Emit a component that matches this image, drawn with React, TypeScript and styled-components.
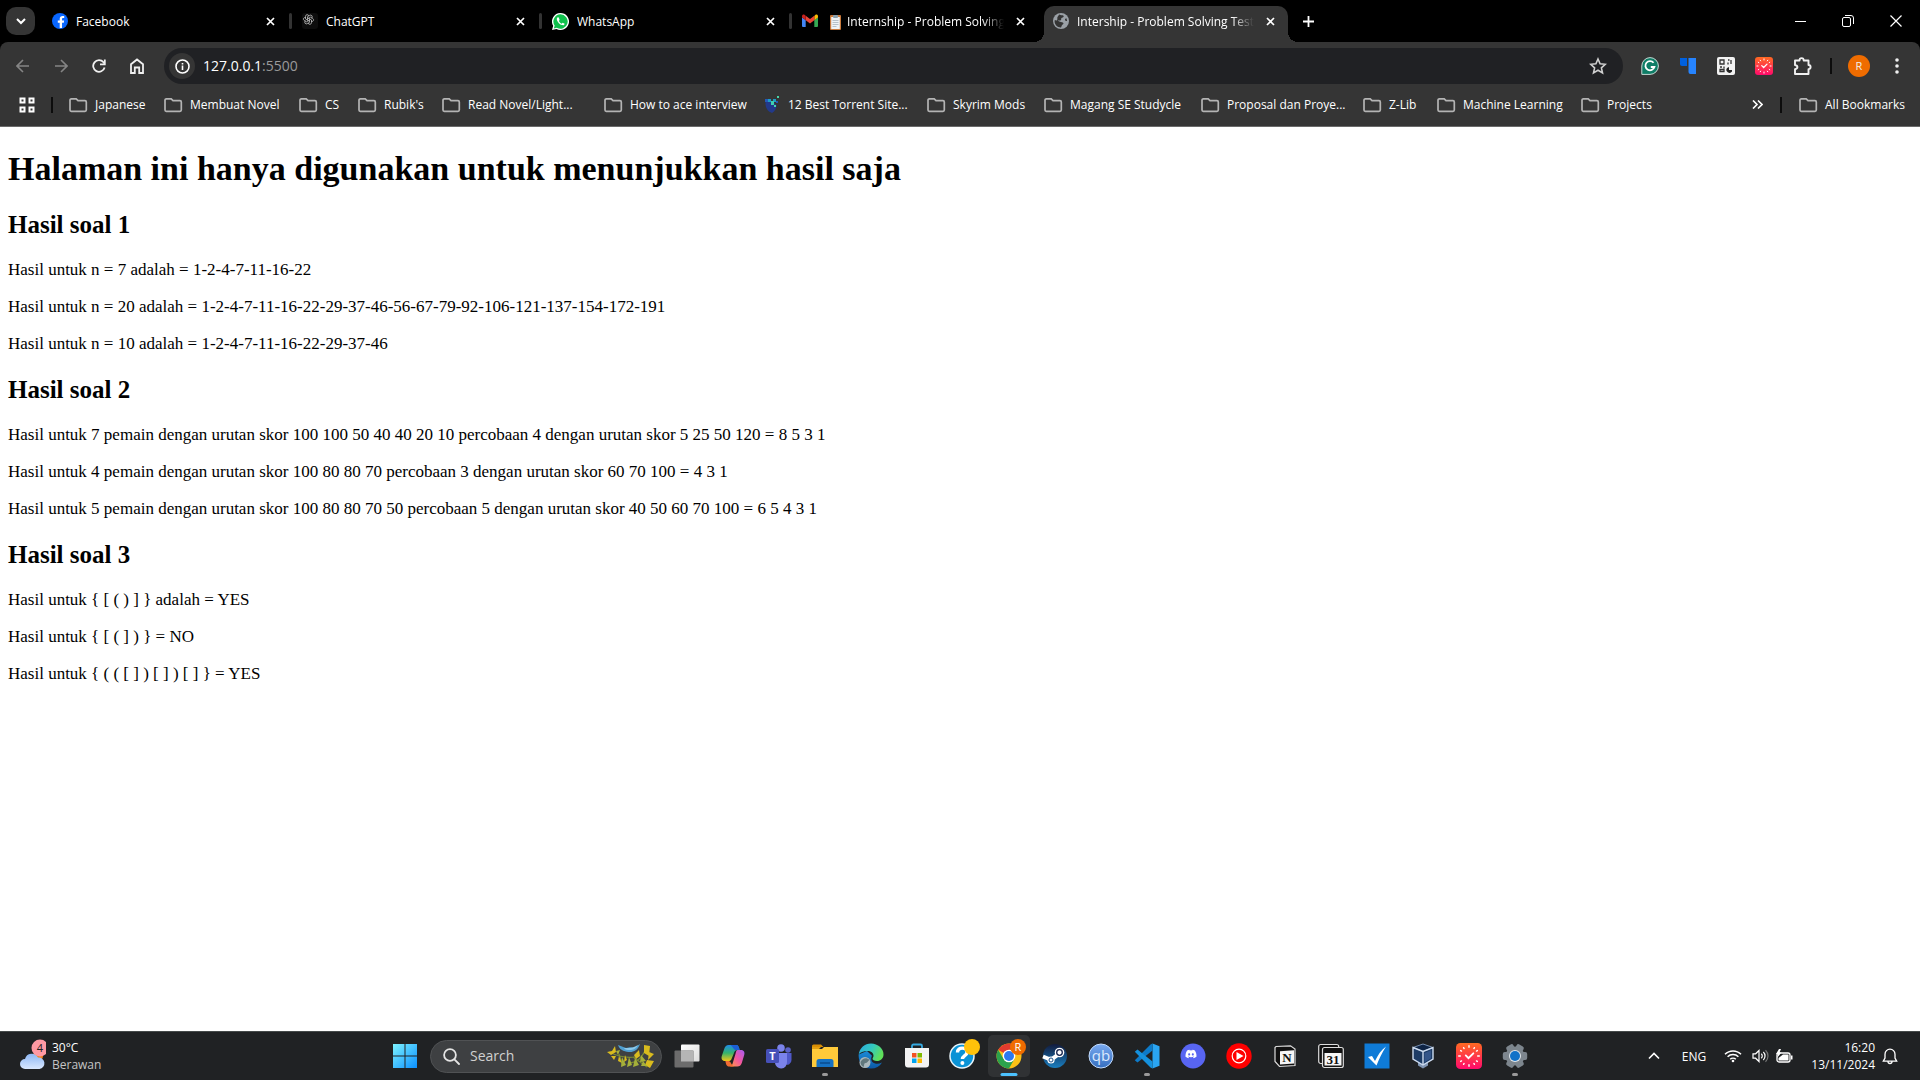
import React from 'react';
import styled, { createGlobalStyle, css } from 'styled-components';
import { FaFacebookF, FaDiscord } from 'react-icons/fa';
import { TbBrandOpenai } from 'react-icons/tb';

const uiFont = `"Segoe UI", "Open Sans", "Noto Sans", sans-serif`;
const serif = `"Liberation Serif", "Times New Roman", serif`;

const Global = createGlobalStyle`
  *, *::before, *::after { box-sizing: border-box; }
  body { margin: 0; background: #fff; }
  button, input { font: inherit; color: inherit; border: 0; background: none; padding: 0; margin: 0; outline: 0; }
  button { display: inline-flex; align-items: center; justify-content: center; flex: none; }
  svg { display: block; flex: none; }
`;

const Screen = styled.div`
  min-height: 100vh;
  display: flex;
  flex-direction: column;
  background: #000;
  font-family: ${uiFont};
  font-size: 12px;
  line-height: 16px;
  color: #fff;
`;

/* ---------- tab strip ---------- */
const TabStrip = styled.header`
  display: flex;
  align-items: flex-end;
  height: 42px;
`;
const TabSearch = styled.button`
  width: 29px;
  height: 28px;
  margin: 0 6px 7px 6px;
  border-radius: 10px;
  background: #353535;
`;
const TabList = styled.div`
  display: flex;
  min-width: 0;
`;
const Tab = styled.div<{ $active?: boolean; $divider?: boolean }>`
  position: relative;
  display: flex;
  align-items: center;
  gap: 8px;
  flex: 0 1 244px;
  width: 244px;
  min-width: 0;
  height: 36px;
  margin: 0 3px;
  padding: 0 10px 6px 8px;
  border-radius: 10px 10px 0 0;
  ${p => p.$active && css`
    padding-left: 9px;
    background: #353535;
    &::before, &::after {
      content: '';
      position: absolute;
      bottom: 0;
      width: 10px;
      height: 10px;
    }
    &::before { left: -10px; background: radial-gradient(circle at 0 0, #000 10px, #353535 10px); }
    &::after { right: -10px; background: radial-gradient(circle at 100% 0, #000 10px, #353535 10px); }
  `}
  ${p => p.$divider && css`
    &::after {
      content: '';
      position: absolute;
      right: -4px;
      top: 7px;
      width: 3px;
      height: 16px;
      border-radius: 2px;
      background: #333;
    }
  `}
`;
const TabTitle = styled.span<{ $fade?: boolean; $lead?: boolean }>`
  flex: 1;
  min-width: 0;
  display: flex;
  align-items: center;
  gap: 6px;
  padding-top: 2px;
  padding-left: ${p => (p.$lead ? 4 : 0)}px;
  overflow: hidden;
  white-space: nowrap;
  ${p => p.$fade && css`mask-image: linear-gradient(to right, #000 calc(100% - 22px), transparent);`}
`;
const CloseButton = styled.button`
  width: 16px;
  height: 16px;
`;
const NewTab = styled.button`
  width: 28px;
  height: 28px;
  margin: 0 0 7px 3px;
`;
const WindowControls = styled.div`
  display: flex;
  align-self: stretch;
  margin-left: auto;
`;
const WindowButton = styled.button`
  width: 48px;
  height: 42px;
`;

/* ---------- toolbar ---------- */
const Toolbar = styled.nav`
  display: flex;
  align-items: center;
  height: 48px;
  padding: 0 4px;
  border-radius: 8px 8px 0 0;
  background: #353535;
`;
const ToolButton = styled.button<{ $dim?: boolean }>`
  width: 38px;
  height: 34px;
  color: ${p => (p.$dim ? '#858585' : '#f0f0f0')};
`;
const Omnibox = styled.div`
  display: flex;
  align-items: center;
  flex: 1;
  min-width: 0;
  height: 36px;
  margin: 0 8px;
  padding: 0 16px 0 5px;
  border-radius: 18px;
  background: #202124;
  font-size: 14px;
  line-height: 20px;
`;
const SiteInfo = styled.button`
  width: 26px;
  height: 26px;
  margin-right: 8px;
  border-radius: 50%;
  background: #353535;
`;
const Address = styled.input`
  field-sizing: content;
  height: 20px;
  color: #fff;
`;
const Port = styled.label`
  flex: 1;
  color: #9a9a9a;
`;
const Avatar = styled.span`
  display: flex;
  align-items: center;
  justify-content: center;
  width: 22px;
  height: 22px;
  border-radius: 50%;
  background: #ef6c00;
  font-size: 11px;
`;
const Divider = styled.i`
  flex: none;
  width: 2px;
  height: 16px;
  background: #0c0c0c;
`;
const ToolDividerWrap = styled.span`
  display: flex;
  justify-content: center;
  width: 19px;
`;

/* ---------- bookmarks ---------- */
const BookmarkBar = styled.nav`
  display: flex;
  align-items: center;
  height: 37px;
  padding: 0 15px 7px 19px;
  border-bottom: 1px solid #6a6a6a;
  background: #353535;
`;
const BookmarkList = styled.div`
  display: flex;
  flex: 1;
  min-width: 0;
  overflow: hidden;
  margin-left: 16px;
`;
const Bookmark = styled.a<{ $w?: number }>`
  display: flex;
  align-items: center;
  gap: 7px;
  flex: none;
  width: ${p => (p.$w ? `${p.$w}px` : 'auto')};
  color: #fff;
  text-decoration: none;
  white-space: nowrap;
`;
const GridButton = styled.button`
  width: 16px;
  height: 16px;
  margin-right: 16px;
`;
const MoreButton = styled.button`
  width: 24px;
  height: 24px;
  margin-right: 11px;
`;
const AllBookmarks = styled(Bookmark)`
  margin-left: 17px;
`;

/* ---------- document ---------- */
const Page = styled.main`
  flex: 1;
  padding: 0 8px;
  background: #fff;
  color: #000;
  font-family: ${serif};
  font-size: 17px;
  line-height: 20px;
`;
const Title = styled.h1`
  margin: 23px 0;
  font-size: 34px;
  line-height: 38px;
`;
const Heading = styled.h2`
  margin: 22px 0 21px;
  font-size: 25px;
  line-height: 28px;
`;
const Line = styled.p`
  margin: 17px 0;
`;

/* ---------- taskbar ---------- */
const Taskbar = styled.footer`
  display: grid;
  grid-template-columns: 1fr auto 1fr;
  align-items: center;
  height: 49px;
  border-top: 1px solid #454a4a;
  background: #202224;
`;
const Weather = styled.button`
  justify-self: start;
  gap: 6px;
  padding-left: 19px;
  text-align: left;
`;
const Stack = styled.span<{ $end?: boolean }>`
  display: flex;
  flex-direction: column;
  align-items: ${p => (p.$end ? 'flex-end' : 'flex-start')};
  line-height: 17px;
`;
const Soft = styled.span`
  color: #c4c4c4;
`;
const Apps = styled.div`
  display: flex;
  align-items: center;
`;
const AppButton = styled.button<{ $active?: boolean }>`
  position: relative;
  width: 42px;
  height: 42px;
  margin: 0 2px;
  border-radius: 5px;
  background: ${p => (p.$active ? '#303234' : 'transparent')};
`;
const Running = styled.i<{ $active?: boolean }>`
  position: absolute;
  left: 50%;
  bottom: 1px;
  width: ${p => (p.$active ? 17 : 6)}px;
  height: 3px;
  border-radius: 2px;
  background: ${p => (p.$active ? '#4cc2ff' : '#9a9a9a')};
  transform: translateX(-50%);
`;
const SearchBox = styled.label`
  display: flex;
  align-items: center;
  width: 232px;
  height: 33px;
  margin: 0 2px;
  padding: 0 6px 0 12px;
  border: 1px solid #505254;
  border-radius: 17px;
  background: #3e4042;
`;
const SearchInput = styled.input`
  flex: 1;
  min-width: 0;
  margin-left: 10px;
  font-size: 14px;
  line-height: 20px;
  &::placeholder { color: #d0d0d0; opacity: 1; }
`;
const Tray = styled.div`
  display: flex;
  align-items: center;
  justify-self: end;
  padding-right: 22px;
`;
const TrayButton = styled.button<{ $w: number }>`
  width: ${p => p.$w}px;
  height: 40px;
`;
const Language = styled(TrayButton)`
  padding-top: 2px;
`;
const Clock = styled.button`
  width: 79px;
  justify-content: flex-end;
  margin-right: 7px;
`;

/* ---------- small icons ---------- */
const stroke = { fill: 'none', stroke: 'currentColor' } as const;

const Cross = () => (
  <svg width="9" height="9" viewBox="0 0 9 9" {...stroke} strokeWidth="1.7"><path d="M1 1l7 7M8 1L1 8" /></svg>
);
const Folder = () => (
  <svg width="19" height="16" viewBox="0 0 19 16" fill="none" stroke="#b4b4b4" strokeWidth="1.7">
    <path d="M1 3V13a1.300 1.300 0 0 0 1.300 1.300H16A1.300 1.300 0 0 0 17.300 13V5A1.300 1.300 0 0 0 16 3.700H9L7.200 1.900H2.300A1.300 1.300 0 0 0 1 3z" />
  </svg>
);
const Facebook = () => (
  <svg width="16" height="16" viewBox="0 0 16 16">
    <circle cx="8" cy="8" r="8" fill="#0866ff" />
    <FaFacebookF x="3" y="3" width="10" height="13" color="#fff" />
  </svg>
);
const ChatGpt = () => (
  <svg width="16" height="16" viewBox="0 0 16 16">
    <rect width="16" height="16" rx="3" fill="#0d0d0d" />
    <TbBrandOpenai x="0.500" y="0.500" width="15" height="15" strokeWidth="1.700" color="#b8b8b8" />
  </svg>
);
const Whatsapp = () => (
  <svg width="17" height="17" viewBox="0 0 17 17">
    <path d="M8.500 0a8.500 8.500 0 1 1-4 16L0 17l1.200-4.200A8.500 8.500 0 0 1 8.500 0z" fill="#fff" />
    <path d="M8.500 1.300a7.200 7.200 0 1 1-3.700 13.400l-3 .8.900-2.900A7.200 7.200 0 0 1 8.500 1.300z" fill="#10c04c" />
    <path d="M5.800 4.300c-1 .6-1.200 1.700-.8 2.900.8 2.200 2.700 4.200 5 4.900 1.300.4 2.400-.1 2.600-1.400l-2-1-.9 1c-1.300-.5-2.300-1.500-2.900-2.700l.8-.9-.8-2.500z" fill="#fff" />
  </svg>
);
const Gmail = () => (
  <svg width="16" height="16" viewBox="0 0 16 16">
    <path d="M1 14h2.700V7L0 4.500V13a1 1 0 0 0 1 1z" fill="#4285f4" />
    <path d="M12.300 14H15a1 1 0 0 0 1-1V4.500L12.300 7z" fill="#34a853" />
    <path d="M12.300 3v4.200L16 4.500V3.300c0-1.500-1.600-2.200-2.700-1.300z" fill="#fbbc04" />
    <path d="M3.700 7.200V2.800L8 6l4.300-3.200v4.400L8 10.500z" fill="#ea4335" />
    <path d="M0 3.300v1.200l3.700 2.700V2.800L2.700 2C1.600 1.100 0 1.800 0 3.300z" fill="#c5221f" />
  </svg>
);
const Clipboard = () => (
  <svg width="11" height="15" viewBox="0 0 11 15">
    <rect width="11" height="15" y="0" rx="1" fill="#c87a3c" />
    <path d="M1.200 2h8.600v12H1.200z" fill="#eef3f6" />
    <rect x="3" y="0" width="5" height="3" rx="1" fill="#8aa0ad" />
    <path d="M2.500 5.500h6M2.500 7.500h6M2.500 9.500h6M2.500 11.500h4" stroke="#a8b4bc" strokeWidth=".8" />
  </svg>
);
const Globe = () => (
  <svg width="16" height="16" viewBox="0 0 16 16">
    <circle cx="8" cy="8" r="8" fill="#9aa0a6" />
    <path d="M6.200 1.600c1.600 1 3.300.3 4.600 1.300-.2 1.600-1.800 1.300-2.500 2.300-.4.800.2 1.500-.6 2.100-1 .5-2.300-.2-3 .5l2.300 1c1.200.5 2.800.1 3.400 1.300.4 1.200-1 1.500-1.600 2.300-.4.600-.3 1.400-.8 2C4.500 14.500 1.700 12 1.600 8.500L1.800 7c.9.300 1.500.6 2.200.2C4.800 6.400 4 5 4.500 4z" fill="#353535" />
    <path d="M13.500 5.200c-1.200 0-1.800 1-1.400 2 .4.900 1.500.6 2 .9z" fill="#353535" />
  </svg>
);
const Torrent = () => (
  <svg width="17" height="17" viewBox="0 0 17 17">
    <path d="M1.500 4l6 1 5 4c0 3.500-1.500 6-4.500 8C3.500 15.500 1.500 11.500 1.500 8z" fill="#22398a" />
    <path d="M4 3h3v3H4zM9 3h3v3H9z" fill="#1b9ec4" />
    <path d="M7 5h3v4H7z" fill="#3fd0b0" />
    <path d="M13 0h2v2h-2zM10 9h2v2h-2z" fill="#46d6a8" />
    <path d="M1 3h3v3H1zM12 5h2v2h-2z" fill="#2458b8" />
  </svg>
);
const Grammarly = () => (
  <svg width="18" height="18" viewBox="0 0 18 18">
    <path d="M9 .6A8.400 8.400 0 0 1 9 17.400H.8V9A8.400 8.400 0 0 1 9 .6z" fill="#0f7d66" stroke="#c8d8d4" strokeWidth="1" />
    <path d="M12.600 5.800A4.600 4.600 0 1 0 13.400 10H9.800" fill="none" stroke="#fff" strokeWidth="1.800" />
  </svg>
);
const BlueBars = () => (
  <svg width="18" height="18" viewBox="0 0 18 18"><path d="M1 1h7v8H3a2 2 0 0 1-2-2z" fill="#0061e0" /><path d="M9.500 1H17v16h-5.500a2 2 0 0 1-2-2z" fill="#2684ff" /></svg>
);
const Qr = () => (
  <svg width="18" height="18" viewBox="0 0 18 18">
    <rect width="18" height="18" rx="2" fill="#f2f2f2" />
    <g fill="none" stroke="#333" strokeWidth="1.300"><path d="M3 3h4v4H3zM11 3h1.500M14 3v4M11 5.500v2M3 10h2M7 9.500v2M3 12.500h4v2H3z" /></g>
    <path d="M10 11a3 3 0 0 0 5 3.500v-1.500h-3v-3z" fill="#222" />
  </svg>
);
const RedClock = ({ size = 18 }: { size?: number }) => (
  <svg width={size} height={size} viewBox="0 0 24 24">
    <defs><linearGradient id={`rc${size}`} x1="0" y1="0" x2="0" y2="1"><stop stopColor="#ff6a22" /><stop offset="1" stopColor="#ff0a6c" /></linearGradient></defs>
    <rect width="24" height="24" rx="4" fill={`url(#rc${size})`} />
    <g fill="none" stroke="#fff" strokeWidth="1.300" strokeLinecap="round"><path d="M12 2.500v1.500M12 20v1.500M2.500 12H4M20 12h1.500M7 4.300l.5.800M17 4.300l-.5.800M7 19.700l.5-.8M17 19.700l-.5-.8M4.300 7l.8.500M19.700 7l-.8.500M4.300 17l.8-.5M19.700 17l-.8-.5" /><path d="M9 11.500l2.500 2.500L16 9.500" strokeWidth="1.700" /></g>
  </svg>
);
const Puzzle = () => (
  <svg width="19" height="20" viewBox="0 0 19 20" {...stroke} strokeWidth="1.900">
    <path d="M2 4.500h4.500c0-3.200 4.200-3.200 4.200 0h4.800V9c2.800 0 2.800 4.200 0 4.200V18H2v-4.800c3.200-.5 3.200-3.700 0-4.200z" strokeLinejoin="round" />
  </svg>
);

/* ---------- taskbar icons ---------- */
const box = { width: 26, height: 26, viewBox: '0 0 26 26' };

const WeatherIcon = () => (
  <svg width="27" height="34" viewBox="0 0 27 34">
    <defs><linearGradient id="cloud" x1="0" y1="0" x2="0" y2="1"><stop stopColor="#8db7f4" /><stop offset="1" stopColor="#d9e8ff" /></linearGradient></defs>
    <circle cx="19" cy="17" r="5" fill="#f58220" />
    <path d="M6 30a5 5 0 0 1 0-10 7 7 0 0 1 13-1.500A5.800 5.800 0 0 1 20.500 30z" fill="url(#cloud)" />
    <circle cx="21" cy="9" r="8.500" fill="#ff99a4" />
    <text x="21" y="13" fontSize="11" textAnchor="middle" fill="#222">4</text>
  </svg>
);
const StartIcon = () => (
  <svg width="24" height="24" viewBox="0 0 24 24">
    <defs><linearGradient id="win" x1="0" y1="0" x2="1" y2="1"><stop stopColor="#7df3ff" /><stop offset="1" stopColor="#0a8fff" /></linearGradient></defs>
    <path d="M0 0h11.500v11.500H0zM12.500 0H24v11.500H12.500zM0 12.500h11.500V24H0zM12.500 12.500H24V24H12.500z" fill="url(#win)" />
  </svg>
);
const Magnifier = () => (
  <svg width="17" height="17" viewBox="0 0 17 17" fill="none" stroke="#e4e4e4" strokeWidth="1.800" strokeLinecap="round"><circle cx="7" cy="7" r="5.900" /><path d="M11.400 11.400L16 16" /></svg>
);
const Bird = () => (
  <svg width="48" height="26" viewBox="0 0 48 26">
    <g fill="none" stroke="#7b8a32" strokeWidth="1.200"><path d="M2 9c8 4 18 6 26 5M22 20c8 0 14-6 18-17M12 11l4 12M26 14l14 10" /></g>
    <g fill="#d9bb1e">
      <path d="M37 2l6 1-1 10-5-3zM42 9l5 2-6 6zM0 9l5-1 3-5 1 6-5 3zM4 13l5 0-2 4zM27 12l5-5 1 6-4 3zM40 17l7 1-4 7-5-3zM12 13l3 7-4-2zM18 12l2 5-3 2z" />
    </g>
    <g fill="#a5b03a">
      <path d="M15 14l4 8-5 2zM22 14l3 8-5 2zM28 15l4 7-6 2zM34 12l5 6-6 1zM36 18l4 5-6 0zM9 8l4-1-2 5z" />
    </g>
    <path d="M11 2l8 3c4-1 6-1 8 0l6-4c-2 6-6 8-10 8-4 0-10-1-12-7z" fill="#4f9fd2" />
    <path d="M17 5c4 0 8 1 14-3-2 4-5 5-8 5-3 0-5 0-6-2z" fill="#8cc8ea" />
  </svg>
);
const TaskView = () => (
  <svg {...box}><defs><linearGradient id="tv" x1="0" y1="0" x2="1" y2="1"><stop stopColor="#fff" /><stop offset="1" stopColor="#dcdcdc" /></linearGradient></defs><rect x="7" y="1.500" width="18.500" height="17" rx="1" fill="url(#tv)" /><rect x=".5" y="7.500" width="19" height="17" rx="1" fill="#6c6c6c" /><path d="M7 7.500h12.500v11H7z" fill="#b5b5b5" /></svg>
);
const Copilot = () => (
  <svg {...box}>
    <defs>
      <linearGradient id="cpa" x1="0" y1="0" x2="0" y2="1"><stop stopColor="#1f8ce8" /><stop offset=".5" stopColor="#35b36c" /><stop offset="1" stopColor="#f3c716" /></linearGradient>
      <linearGradient id="cpb" x1="1" y1="0" x2="0" y2="1"><stop stopColor="#a65cf5" /><stop offset=".5" stopColor="#f4569e" /><stop offset="1" stopColor="#ffa13c" /></linearGradient>
    </defs>
    <path d="M17.500 7H21c3 0 4 2.500 3.200 5l-2.400 8c-.8 2.500-2.300 3.500-4.500 3.500H9c2 0 3-1 3.600-3l3-10c.5-2 .9-3.500 1.900-3.500z" fill="url(#cpb)" />
    <path d="M8.500 18H5c-3 0-4-2.500-3.200-5l2.400-7C5 3.500 6.500 2 8.700 2H16c2.500 0 3 2 3.600 5h-2c-2 0-3 1-3.600 3l-2.500 6c-.6 1.500-1.500 2-3 2z" fill="url(#cpa)" />
    <path d="M10.500 2H16c2.500 0 3 2 3.600 5h-4c-2-.1-2.600-3.500-5.100-5z" fill="#1c5fd6" />
    <path d="M9 23.500c-2.500 0-3-2.300-3.600-5.500h3.200c2.200 0 2.400 4 5.400 5.500z" fill="#f06c33" />
  </svg>
);
const Teams = () => (
  <svg {...box}>
    <circle cx="22" cy="7" r="2.800" fill="#5b62c8" /><circle cx="15" cy="5" r="3.800" fill="#7b83eb" />
    <path d="M17 10h8.500v7a4.500 4.500 0 0 1-7 4z" fill="#5059c9" /><path d="M9 10h12v9a6 6 0 0 1-12 1z" fill="#7b83eb" />
    <rect x="0" y="6" width="13" height="14" rx="1.500" fill="#4650b8" />
    <text x="6.500" y="17" fontSize="11" fontWeight="700" textAnchor="middle" fill="#fff">T</text>
  </svg>
);
const Explorer = () => (
  <svg {...box}>
    <path d="M0 3a1.500 1.500 0 0 1 1.500-1.500H9L11.500 4H0z" fill="#d98e04" /><path d="M0 6h10l2-2h14v20H0z" fill="#ffca3a" /><path d="M0 6h7l2-2H0z" fill="#e4a010" />
    <path d="M4.500 24v-5.500a2.500 2.500 0 0 1 2.500-2.500h12a2.500 2.500 0 0 1 2.500 2.500V24z" fill="#1672c4" /><path d="M8 20h10" stroke="#0a4d8f" strokeWidth="1.500" />
  </svg>
);
const Edge = () => (
  <svg {...box}>
    <defs>
      <linearGradient id="eg" x1="0" y1="0" x2="1" y2=".4"><stop stopColor="#2ba8e0" /><stop offset=".55" stopColor="#33c8c0" /><stop offset="1" stopColor="#5fe05a" /></linearGradient>
      <linearGradient id="ed" x1="0" y1="0" x2="0" y2="1"><stop stopColor="#1a8bd8" /><stop offset="1" stopColor="#0c59a4" /></linearGradient>
    </defs>
    <path d="M.7 11.500C.5 13 .5 25.500 13 25.500c5 0 8.500-2 11-6-2 1-4 1.500-6 1.200-4-.7-6-4-4-8L9 8z" fill="url(#ed)" />
    <path d="M.7 11.500C1.500 5 6.700.5 13 .5c7 0 12.500 5 12.500 11 0 4-3 6.500-6.500 6.500-3 0-4.500-1.200-4.500-2.200 0-.8 1-1.300 1-3C15.500 10 13 8 9.500 8 5.500 8 2 9.500.7 11.500z" fill="url(#eg)" />
    <circle cx="7" cy="19.500" r="5.500" fill="#aab8bd" /><path d="M2.500 19c2-4 6-5 9-2-2 1-2 3-4 3s-1 3-2 4c-2-1-3-3-3-5z" fill="#61787d" />
  </svg>
);
const Store = () => (
  <svg {...box}>
    <path d="M8 5V3a1.500 1.500 0 0 1 1.500-1.500h7A1.500 1.500 0 0 1 18 3v2" fill="none" stroke="#36a9e0" strokeWidth="1.800" /><path d="M1 5h24v16.500a3 3 0 0 1-3 3H4a3 3 0 0 1-3-3z" fill="#f3f3f3" />
    <path d="M8 10h4.500v4.500H8z" fill="#f25022" /><path d="M13.500 10H18v4.500h-4.500z" fill="#7fba00" /><path d="M8 15.500h4.500V20H8z" fill="#00a4ef" /><path d="M13.500 15.500H18V20h-4.500z" fill="#ffb900" />
  </svg>
);
const Help = () => (
  <svg width="34" height="34" viewBox="0 0 34 34">
    <circle cx="16" cy="17" r="12" fill="#0a93d6" stroke="#e8f4fa" strokeWidth="1.500" />
    <path d="M11.500 13.500c0-6 9.500-5.500 9.500-.3 0 3.300-4.600 3.400-4.600 6.800" fill="none" stroke="#fff" strokeWidth="3.400" /><circle cx="16.400" cy="24" r="2" fill="#fff" />
    <circle cx="26" cy="8" r="8" fill="#ffc20a" />
  </svg>
);
const Chrome = () => (
  <svg width="34" height="34" viewBox="0 0 34 34">
    <circle cx="17" cy="17" r="12.500" fill="#fbc116" />
    <path d="M17 17L6.200 10.750A12.500 12.500 0 0 1 27.800 10.750H17z" fill="#e33b2e" />
    <path d="M6.200 10.750A12.500 12.500 0 0 0 17 29.500l5.400-9.400L17 17l-5.400 3.100z" fill="#2ba24c" />
    <circle cx="17" cy="17" r="6.300" fill="#fff" /><circle cx="17" cy="17" r="5" fill="#2d79f0" />
    <circle cx="26" cy="8" r="8" fill="#ef6c00" /><text x="26" y="12" fontSize="11" textAnchor="middle" fill="#fff">R</text>
  </svg>
);
const Steam = () => (
  <svg {...box}>
    <defs><linearGradient id="st" x1="0" y1="0" x2="0" y2="1"><stop stopColor="#121a3c" /><stop offset="1" stopColor="#1a7fc0" /></linearGradient></defs>
    <circle cx="13" cy="13" r="12" fill="url(#st)" />
    <path d="M1 13.500l8 3.300 6-4.500" stroke="#fff" strokeWidth="4" fill="none" /><circle cx="17.500" cy="9.500" r="4.800" fill="#fff" /><circle cx="17.500" cy="9.500" r="2.800" fill="none" stroke="#16244e" strokeWidth="1.300" /><circle cx="9" cy="17" r="3.600" fill="#fff" /><circle cx="9" cy="17" r="2" fill="none" stroke="#1a4f88" strokeWidth="1" />
  </svg>
);
const Qb = () => (
  <svg {...box}>
    <defs><linearGradient id="qb" x1="0" y1="0" x2="0" y2="1"><stop stopColor="#79aaf0" /><stop offset="1" stopColor="#356ebf" /></linearGradient></defs>
    <circle cx="13" cy="13" r="12" fill="url(#qb)" stroke="#c4dcfb" strokeWidth="1" /><text x="13" y="17.500" fontSize="15" textAnchor="middle" fill="#dceafd">qb</text>
  </svg>
);
const VsCode = () => (
  <svg {...box}>
    <path d="M18.500.5L25.500 3.200v19.600l-7 2.700z" fill="#2aa5f2" /><path d="M18.500 7.500L3.500 19.500.8 17.300 16.500 1.500l2-1z" fill="#0d7ac8" /><path d="M18.500 18.500L3.500 6.500.8 8.700 16.500 24.500l2 1z" fill="#1591dd" />
  </svg>
);
const Discord = () => (
  <svg {...box}><circle cx="13" cy="13" r="12.500" fill="#5865f2" /><FaDiscord x="5" y="5" width="16" height="16" color="#fff" /></svg>
);
const YtMusic = () => (
  <svg {...box}><circle cx="13" cy="13" r="12.700" fill="#f00" /><circle cx="13" cy="13" r="6.800" fill="none" stroke="#fff" strokeWidth="1.200" /><path d="M10.500 9l7 4-7 4z" fill="#fff" /></svg>
);
const Notion = () => (
  <svg {...box}>
    <path d="M3 4.500L3 18.500 7.500 23.500 23 22.500V6L18.500 2.800 4 3.500z" fill="#111" stroke="#dcdcdc" strokeWidth="1.200" />
    <path d="M8 8.200l14-1V20.500L8 21.500z" fill="#f6f6f6" />
    <text x="15" y="19" fontSize="13" fontWeight="700" fontFamily={serif} textAnchor="middle" fill="#111">N</text>
  </svg>
);
const NotionCalendar = () => (
  <svg {...box}>
    <rect x=".7" y="1.500" width="20" height="19" rx="2" fill="#111" stroke="#dcdcdc" strokeWidth="1.200" /><rect x="4.500" y="4.500" width="20.800" height="20" rx="2" fill="#111" stroke="#dcdcdc" strokeWidth="1.200" /><path d="M6.500 10h17v12.500h-17z" fill="#f6f6f6" /><text x="15" y="21" fontSize="13" fontWeight="700" fontFamily={serif} textAnchor="middle" fill="#111">31</text>
  </svg>
);
const Todo = () => (
  <svg {...box}><path d="M.5.500h25v25H.5z" fill="#0f7bd7" /><path d="M4 14l4-1 3 5C14 12 17 7 22 3.500 18 10 15 16 12.500 22.500z" fill="#fff" /></svg>
);
const VirtualBox = () => (
  <svg {...box}>
    <path d="M8 19h10v3.500l-5 3-5-3z" fill="#8196b4" /><path d="M13 1L23 4.500v11.500L13 22 3 16V4.500z" fill="#1d3c66" /><path d="M13 1L23 4.500 13 8.500 3 4.500z" fill="#0e2445" stroke="#8fa9cc" strokeWidth=".8" /><path d="M3 4.500l10 4 10-4V16l-10 6-10-6z" fill="none" stroke="#cddcf0" strokeWidth="1.400" /><path d="M13 8.500V22" stroke="#cddcf0" strokeWidth="1.400" /><path d="M14.500 10l6.500-2.700v8l-6.500 4z" fill="#34568a" />
  </svg>
);
const Gear = () => (
  <svg {...box}>
    <g fill="#7d868e">{[0, 60, 120].map(a => <rect key={a} x="9" y=".8" width="8" height="24.400" rx="2" transform={`rotate(${a + 30} 13 13)`} />)}<circle cx="13" cy="13" r="9.500" /></g>
    <circle cx="13" cy="13" r="6" fill="#dfe6ec" /><circle cx="13" cy="13" r="5" fill="#1272c8" />
  </svg>
);

/* ---------- data ---------- */
const tabs = [
  { title: 'Facebook', icon: <Facebook />, divider: true },
  { title: 'ChatGPT', icon: <ChatGpt />, divider: true },
  { title: 'WhatsApp', icon: <Whatsapp />, divider: true },
  { title: 'Internship - Problem Solving', icon: <Gmail />, lead: <Clipboard />, fade: true },
  { title: 'Intership - Problem Solving Test', icon: <Globe />, active: true, fade: true },
];
const bookmarks: { name: string; w: number; icon?: React.ReactNode }[] = [
  { name: 'Japanese', w: 95 },
  { name: 'Membuat Novel', w: 135 },
  { name: 'CS', w: 59 },
  { name: "Rubik's", w: 84 },
  { name: 'Read Novel/Light...', w: 162 },
  { name: 'How to ace interview', w: 160 },
  { name: '12 Best Torrent Site...', w: 163, icon: <Torrent /> },
  { name: 'Skyrim Mods', w: 117 },
  { name: 'Magang SE Studycle', w: 157 },
  { name: 'Proposal dan Proye...', w: 162 },
  { name: 'Z-Lib', w: 74 },
  { name: 'Machine Learning', w: 144 },
  { name: 'Projects', w: 72 },
];
const sections = [
  { title: 'Hasil soal 1', lines: [
    'Hasil untuk n = 7 adalah = 1-2-4-7-11-16-22',
    'Hasil untuk n = 20 adalah = 1-2-4-7-11-16-22-29-37-46-56-67-79-92-106-121-137-154-172-191',
    'Hasil untuk n = 10 adalah = 1-2-4-7-11-16-22-29-37-46',
  ] },
  { title: 'Hasil soal 2', lines: [
    'Hasil untuk 7 pemain dengan urutan skor 100 100 50 40 40 20 10 percobaan 4 dengan urutan skor 5 25 50 120 = 8 5 3 1',
    'Hasil untuk 4 pemain dengan urutan skor 100 80 80 70 percobaan 3 dengan urutan skor 60 70 100 = 4 3 1',
    'Hasil untuk 5 pemain dengan urutan skor 100 80 80 70 50 percobaan 5 dengan urutan skor 40 50 60 70 100 = 6 5 4 3 1',
  ] },
  { title: 'Hasil soal 3', lines: [
    'Hasil untuk { [ ( ) ] } adalah = YES',
    'Hasil untuk { [ ( ] ) } = NO',
    'Hasil untuk { ( ( [ ] ) [ ] ) [ ] } = YES',
  ] },
];
const apps: { name: string; icon: React.ReactNode; running?: boolean; active?: boolean }[] = [
  { name: 'Task view', icon: <TaskView /> },
  { name: 'Copilot', icon: <Copilot /> },
  { name: 'Teams', icon: <Teams /> },
  { name: 'File Explorer', icon: <Explorer />, running: true },
  { name: 'Edge', icon: <Edge /> },
  { name: 'Microsoft Store', icon: <Store /> },
  { name: 'Get Help', icon: <Help /> },
  { name: 'Chrome', icon: <Chrome />, running: true, active: true },
  { name: 'Steam', icon: <Steam /> },
  { name: 'qBittorrent', icon: <Qb /> },
  { name: 'Visual Studio Code', icon: <VsCode />, running: true },
  { name: 'Discord', icon: <Discord /> },
  { name: 'YouTube Music', icon: <YtMusic /> },
  { name: 'Notion', icon: <Notion /> },
  { name: 'Notion Calendar', icon: <NotionCalendar /> },
  { name: 'Tasks', icon: <Todo /> },
  { name: 'VirtualBox', icon: <VirtualBox /> },
  { name: 'Clock', icon: <RedClock size={26} /> },
  { name: 'Settings', icon: <Gear />, running: true },
];

export default function App() {
  return (
    <Screen>
      <Global />
      <TabStrip>
        <TabSearch aria-label="Search tabs">
          <svg width="10" height="7" viewBox="0 0 10 7" {...stroke} strokeWidth="2"><path d="M1 1l4 4 4-4" /></svg>
        </TabSearch>
        <TabList role="tablist">
          {tabs.map(t => (
            <Tab key={t.title} role="tab" aria-selected={!!t.active} $active={t.active} $divider={t.divider}>
              {t.icon}
              <TabTitle $fade={t.fade} $lead={!!t.lead}>{t.lead}{t.title}</TabTitle>
              <CloseButton aria-label="Close"><Cross /></CloseButton>
            </Tab>
          ))}
        </TabList>
        <NewTab aria-label="New tab">
          <svg width="11" height="11" viewBox="0 0 11 11" {...stroke} strokeWidth="1.800"><path d="M5.500 0v11M0 5.500h11" /></svg>
        </NewTab>
        <WindowControls>
          <WindowButton aria-label="Minimize"><svg width="11" height="11" viewBox="0 0 11 11" {...stroke}><path d="M0 5.500h11" /></svg></WindowButton>
          <WindowButton aria-label="Restore"><svg width="12" height="12" viewBox="0 0 12 12" {...stroke}><rect x=".5" y="2.500" width="8" height="9" rx="1.500" /><path d="M3 .5h6a2.500 2.500 0 0 1 2.500 2.500v6" /></svg></WindowButton>
          <WindowButton aria-label="Close window"><svg width="12" height="12" viewBox="0 0 12 12" {...stroke} strokeWidth="1.200"><path d="M.5.500l11 11M11.500.500l-11 11" /></svg></WindowButton>
        </WindowControls>
      </TabStrip>

      <Toolbar>
        <ToolButton $dim aria-label="Back"><svg width="14" height="14" viewBox="0 0 14 14" {...stroke} strokeWidth="1.600"><path d="M13 7H1.500M7 1L1 7l6 6" /></svg></ToolButton>
        <ToolButton $dim aria-label="Forward"><svg width="14" height="14" viewBox="0 0 14 14" {...stroke} strokeWidth="1.600"><path d="M1 7h11.500M7 1l6 6-6 6" /></svg></ToolButton>
        <ToolButton aria-label="Reload"><svg width="14" height="14" viewBox="0 0 14 14" {...stroke} strokeWidth="1.800"><path d="M12.600 8.500A5.800 5.800 0 1 1 11.500 3.300l1 1.200" /><path d="M12.800.5v4.800H8" /></svg></ToolButton>
        <ToolButton aria-label="Home"><svg width="14" height="16" viewBox="0 0 14 16" {...stroke} strokeWidth="1.800"><path d="M1 6.200V15h3.800V9.500h4.400V15H13V6.200L7 1.500z" /></svg></ToolButton>
        <Omnibox>
          <SiteInfo aria-label="Site information"><svg width="15" height="15" viewBox="0 0 15 15" {...stroke} strokeWidth="1.600"><circle cx="7.500" cy="7.500" r="6.500" /><path d="M7.500 6.500v4.500M7.500 4v1.500" /></svg></SiteInfo>
          <Address id="address" aria-label="Address" defaultValue="127.0.0.1" />
          <Port htmlFor="address">:5500</Port>
          <button aria-label="Bookmark this tab"><svg width="18" height="18" viewBox="0 0 18 18" fill="none" stroke="#d0d0d0" strokeWidth="1.600"><path d="M9 2l2.100 4.800 5.200.5-3.900 3.500 1.100 5.100L9 13.200l-4.500 2.700 1.100-5.100L1.700 7.300l5.200-.5z" /></svg></button>
        </Omnibox>
        <ToolButton aria-label="Grammarly"><Grammarly /></ToolButton>
        <ToolButton aria-label="Board"><BlueBars /></ToolButton>
        <ToolButton aria-label="QR code"><Qr /></ToolButton>
        <ToolButton aria-label="Clock"><RedClock /></ToolButton>
        <ToolButton aria-label="Extensions"><Puzzle /></ToolButton>
        <ToolDividerWrap><Divider /></ToolDividerWrap>
        <ToolButton aria-label="Profile"><Avatar>R</Avatar></ToolButton>
        <ToolButton aria-label="Menu"><svg width="4" height="18" viewBox="0 0 4 18" fill="#f0f0f0"><circle cx="2" cy="3" r="1.800" /><circle cx="2" cy="9" r="1.800" /><circle cx="2" cy="15" r="1.800" /></svg></ToolButton>
      </Toolbar>

      <BookmarkBar>
        <GridButton aria-label="Apps"><svg width="16" height="16" viewBox="0 0 16 16" {...stroke} strokeWidth="2"><path d="M1.500 1.500h4v4h-4zM10.500 1.500h4v4h-4zM1.500 10.500h4v4h-4zM10.500 10.500h4v4h-4z" /></svg></GridButton>
        <Divider />
        <BookmarkList>
          {bookmarks.map(b => (
            <Bookmark key={b.name} href="#" $w={b.w}>{b.icon ?? <Folder />}{b.name}</Bookmark>
          ))}
        </BookmarkList>
        <MoreButton aria-label="More bookmarks"><svg width="11" height="9" viewBox="0 0 11 9" {...stroke} strokeWidth="1.600"><path d="M1 .5l4 4-4 4M6 .5l4 4-4 4" /></svg></MoreButton>
        <Divider />
        <AllBookmarks href="#"><Folder />All Bookmarks</AllBookmarks>
      </BookmarkBar>

      <Page>
        <Title>Halaman ini hanya digunakan untuk menunjukkan hasil saja</Title>
        {sections.map(s => (
          <section key={s.title}>
            <Heading>{s.title}</Heading>
            {s.lines.map(l => <Line key={l}>{l}</Line>)}
          </section>
        ))}
      </Page>

      <Taskbar>
        <Weather><WeatherIcon /><Stack><span>30°C</span><Soft>Berawan</Soft></Stack></Weather>
        <Apps>
          <AppButton aria-label="Start"><StartIcon /></AppButton>
          <SearchBox><Magnifier /><SearchInput type="text" placeholder="Search" aria-label="Search" /><Bird /></SearchBox>
          {apps.map(a => (
            <AppButton key={a.name} aria-label={a.name} $active={a.active}>
              {a.icon}
              {a.running && <Running $active={a.active} />}
            </AppButton>
          ))}
        </Apps>
        <Tray>
          <TrayButton $w={32} aria-label="Show hidden icons"><svg width="12" height="8" viewBox="0 0 12 8" {...stroke} strokeWidth="1.600"><path d="M1 6.500l5-5 5 5" /></svg></TrayButton>
          <Language $w={48}>ENG</Language>
          <TrayButton $w={30} aria-label="Network"><svg width="18" height="14" viewBox="0 0 18 14" {...stroke} strokeWidth="1.500"><path d="M1 5.200a11.300 11.300 0 0 1 16 0M3.600 7.800a7.600 7.600 0 0 1 10.800 0M6.200 10.300a4 4 0 0 1 5.600 0" /><circle cx="9" cy="12" r="1.300" fill="#fff" stroke="none" /></svg></TrayButton>
          <TrayButton $w={24} aria-label="Volume"><svg width="17" height="14" viewBox="0 0 17 14" {...stroke} strokeWidth="1.200"><path d="M1 4.800v4.400h2.600L7 12.500v-11L3.600 4.800zM9.300 4.800a3 3 0 0 1 0 4.400M11.300 3a5.500 5.500 0 0 1 0 8" /><path d="M13.500 1.200a8 8 0 0 1 0 11.600" stroke="#777" /></svg></TrayButton>
          <TrayButton $w={24} aria-label="Battery"><svg width="18" height="14" viewBox="0 0 18 14"><rect x="2" y="4" width="13" height="9" rx="2" fill="none" stroke="#fff" strokeWidth="1.300" /><path d="M8 5.500h5.500v6H3.500V9zM16 6.500h1.500v4H16z" fill="#fff" /><path d="M4 0L1 5h2l-1 4 4.500-5.500h-2L6 0z" fill="#fff" /></svg></TrayButton>
          <Clock><Stack $end><span>16:20</span><span>13/11/2024</span></Stack></Clock>
          <button aria-label="Notifications"><svg width="16" height="17" viewBox="0 0 16 17" {...stroke} strokeWidth="1.300"><path d="M8 1.200a5 5 0 0 0-5 5V10l-1.700 3.200h13.400L13 10V6.200a5 5 0 0 0-5-5zM6 13.500a2 2 0 0 0 4 0" /></svg></button>
        </Tray>
      </Taskbar>
    </Screen>
  );
}
